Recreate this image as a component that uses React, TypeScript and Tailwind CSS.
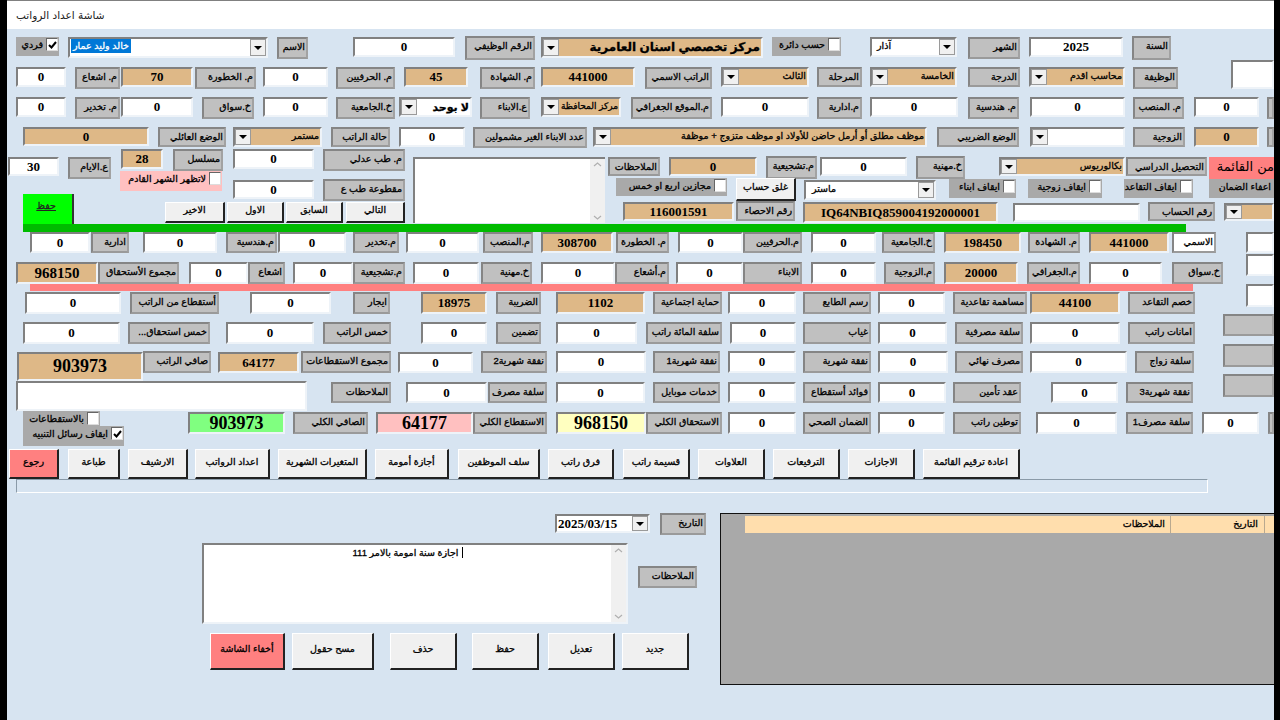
import type { ReactNode } from "react";

const ar = "[font-family:'Liberation_Sans','DejaVu_Sans',sans-serif] [-webkit-text-stroke-width:0.3px]";
const N = "h-[20px] self-start";

function Lbl({ c = "", bg = "bg-[#c0c0c0]", children }: { c?: string; bg?: string; children?: ReactNode }) {
  return (
    <div
      dir="rtl"
      className={`shrink-0 overflow-hidden whitespace-nowrap border-2 border-t-[#858585] border-l-[#858585] border-r-[#a2a2a2] border-b-[#9a9a9a] pr-[1px] pt-[1px] text-[9.5px] leading-[13px] text-black ${bg} ${ar} ${c}`}
    >
      {children}
    </div>
  );
}

function Num({
  c = "",
  bg = "bg-white",
  size = "text-[13px]",
  children = "0",
}: {
  c?: string;
  bg?: string;
  size?: string;
  children?: ReactNode;
}) {
  return (
    <div
      className={`flex shrink-0 items-center justify-center overflow-hidden border-2 border-t-[#808080] border-l-[#808080] border-r-[#eef3f8] border-b-[#eef3f8] font-bold text-black [font-family:'Liberation_Serif',serif] ${bg} ${size} ${c}`}
    >
      {children}
    </div>
  );
}

function Tan({ c = "", size, children = "0" }: { c?: string; size?: string; children?: ReactNode }) {
  return (
    <Num c={c} bg="bg-[#deb887]" size={size}>
      {children}
    </Num>
  );
}

function Arrow() {
  return (
    <span className="flex w-[16px] shrink-0 items-center justify-center border border-[#9a9a9a] bg-[#f0f0f0]">
      <svg width="8" height="4" viewBox="0 0 8 4">
        <path d="M0 0h8L4 4z" fill="#000" />
      </svg>
    </span>
  );
}

function Combo({
  c = "",
  t,
  right = false,
  text = "text-[9.5px] leading-[14px]",
  align = "text-right",
}: {
  c?: string;
  t?: ReactNode;
  right?: boolean;
  text?: string;
  align?: string;
}) {
  return (
    <div
      className={`flex shrink-0 overflow-hidden border-2 border-t-[#808080] border-l-[#808080] border-r-[#eef3f8] border-b-[#eef3f8] ${c}`}
    >
      {!right && <Arrow />}
      <div
        dir="rtl"
        className={`min-w-0 flex-1 overflow-hidden whitespace-nowrap px-[1px] text-black ${ar} ${text} ${align}`}
      >
        {t}
      </div>
      {right && <Arrow />}
    </div>
  );
}

function Chk({
  c = "",
  bg = "bg-[#a9a9a9]",
  t,
  on = false,
}: {
  c?: string;
  bg?: string;
  t: string;
  on?: boolean;
}) {
  return (
    <div className={`flex shrink-0 items-start justify-end gap-[3px] overflow-hidden pr-[1px] pt-[1px] ${bg} ${c}`}>
      <span dir="rtl" className={`whitespace-nowrap text-[9.5px] leading-[14px] text-black ${ar}`}>
        {t}
      </span>
      <span className="flex h-[13px] w-[12px] shrink-0 items-center justify-center border border-t-[#666666] border-l-[#666666] border-r-[#dddddd] border-b-[#dddddd] bg-white">
        {on && (
          <svg width="9" height="8" viewBox="0 0 9 8">
            <path d="M1 4l2.5 2.5L8 1" fill="none" stroke="#000" strokeWidth="2" />
          </svg>
        )}
      </span>
    </div>
  );
}

function Btn({ c = "", children }: { c?: string; children: ReactNode }) {
  return (
    <div
      dir="rtl"
      className={`flex shrink-0 items-center justify-center whitespace-nowrap border border-t-white border-l-white border-r-2 border-b-2 border-r-[#222222] border-b-[#222222] pb-[3px] text-[9.5px] text-black ${ar} ${c}`}
    >
      {children}
    </div>
  );
}

function Scroll() {
  return (
    <div className="flex w-[15px] shrink-0 flex-col items-center justify-between bg-[#f0f0f0] py-[3px] text-[#b0b0b0]">
      <svg width="9" height="5" viewBox="0 0 9 5">
        <path d="M1 4l3.5-3L8 4" fill="none" stroke="currentColor" strokeWidth="1.2" />
      </svg>
      <svg width="9" height="5" viewBox="0 0 9 5">
        <path d="M1 1l3.5 3L8 1" fill="none" stroke="currentColor" strokeWidth="1.2" />
      </svg>
    </div>
  );
}

const btn = "bg-[#f0f0f0]";

export default function App() {
  return (
    <div className="flex h-[720px] w-[1280px] overflow-hidden bg-black">
      <div className="w-[7px] shrink-0" />
      <div className="flex w-[1267px] shrink-0 flex-col overflow-hidden bg-[#d7e4f1]">
        <div className="flex h-[29px] shrink-0 items-center border-t border-[#808080] bg-white pl-[9px]">
          <span dir="rtl" className="text-[10.5px] leading-none text-[#222222] [font-family:'DejaVu_Sans',sans-serif]">
            شاشة اعداد الرواتب
          </span>
        </div>

        {/* الصف الاول */}
        <div className="mt-[7px] flex h-[24px] shrink-0">
          <Chk c="ml-[9px] mt-[1px] h-[19px] w-[43px]" t="فردي" on />
          <Combo
            c="ml-[9px] mt-[1px] h-[21px] w-[200px] bg-white"
            right
            align="text-left"
            t={<span className="inline-block bg-[#0078d7] px-[2px] text-white">خالد وليد عمار</span>}
          />
          <Lbl c="ml-[9px] mt-[1px] h-[22px] w-[31px]">الاسم</Lbl>
          <Num c="ml-[45px] mt-[1px] h-[20px] w-[102px]" />
          <Lbl c="ml-[10px] w-[70px]">الرقم الوظيفي</Lbl>
          <Combo
            c="ml-[6px] mt-[1px] h-[21px] w-[222px] bg-[#deb887]"
            t="مركز تخصصي اسنان العامرية"
            text="text-[12px] font-bold leading-[17px]"
          />
          <Chk c="ml-[9px] mt-[1px] h-[19px] w-[69px]" t="حسب دائرة" />
          <Combo
            c="ml-[29px] mt-[1px] h-[20px] w-[87px] bg-white"
            right
            align="text-left"
            t={<span className="ml-[4px] inline-block">آذار</span>}
          />
          <Lbl c="ml-[11px] mt-[1px] h-[22px] w-[52px]">الشهر</Lbl>
          <Num c="ml-[9px] mt-[1px] h-[20px] w-[94px]">2025</Num>
          <Lbl c="ml-[9px] w-[39px]">السنة</Lbl>
        </div>

        <div className="mt-[7px] flex h-[22px] shrink-0">
          <Num c={`ml-[9px] w-[50px] ${N}`} />
          <Lbl c="ml-[9px] w-[45px]">م. اشعاع</Lbl>
          <Tan c={`ml-[1px] w-[72px] ${N}`}>70</Tan>
          <Lbl c="ml-[2px] w-[61px]">م. الخطورة</Lbl>
          <Num c={`ml-[7px] w-[65px] ${N}`} />
          <Lbl c="ml-[8px] w-[59px]">م. الحرفيين</Lbl>
          <Tan c={`ml-[9px] w-[64px] ${N}`}>45</Tan>
          <Lbl c="ml-[12px] w-[55px]">م. الشهادة</Lbl>
          <Tan c={`ml-[6px] w-[94px] ${N}`}>441000</Tan>
          <Lbl c="ml-[10px] w-[67px]">الراتب الاسمي</Lbl>
          <Combo c={`ml-[9px] w-[88px] bg-[#deb887] ${N}`} t="الثالث" />
          <Lbl c="ml-[8px] h-[20px] w-[45px]">المرحلة</Lbl>
          <Combo c={`ml-[8px] w-[87px] bg-[#deb887] ${N}`} t="الخامسة" />
          <Lbl c="ml-[11px] h-[20px] w-[52px]">الدرجة</Lbl>
          <Combo c={`ml-[9px] w-[96px] bg-[#deb887] ${N}`} t="محاسب اقدم" />
          <Lbl c="ml-[8px] w-[45px]">الوظيفة</Lbl>
          <Num c="-mt-[7px] ml-[53px] h-[29px] w-[43px]"> </Num>
        </div>

        <div className="mt-[8px] flex h-[22px] shrink-0">
          <Num c={`ml-[9px] w-[50px] ${N}`} />
          <Lbl c="ml-[9px] w-[45px]">م. تخدير</Lbl>
          <Num c={`ml-[1px] w-[72px] ${N}`} />
          <Lbl c="ml-[9px] w-[52px]">خ.سواق</Lbl>
          <Num c={`ml-[9px] w-[65px] ${N}`} />
          <Lbl c="ml-[8px] w-[59px]">خ.الجامعية</Lbl>
          <Combo c={`ml-[4px] w-[73px] bg-white ${N}`} t="لا بوحد" text="text-[11px] font-bold leading-[16px]" />
          <Lbl c="ml-[8px] w-[50px]">ع.الابناء</Lbl>
          <Combo c={`ml-[11px] w-[80px] bg-[#deb887] ${N}`} t="مركز المحافظة" text="text-[9px] leading-[14px]" />
          <Lbl c="ml-[10px] w-[81px]">م.الموقع الجغرافي</Lbl>
          <Num c={`ml-[9px] w-[88px] ${N}`} />
          <Lbl c="ml-[8px] w-[45px]">م.ادارية</Lbl>
          <Num c={`ml-[8px] w-[88px] ${N}`} />
          <Lbl c="ml-[10px] w-[51px]">م. هندسية</Lbl>
          <Num c={`ml-[11px] w-[95px] ${N}`} />
          <Lbl c="ml-[8px] w-[51px]">م. المنصب</Lbl>
          <Num c={`ml-[10px] w-[65px] ${N}`} />
          <Lbl c="ml-[8px] w-[7px]" />
        </div>

        <div className="mt-[8px] flex h-[20px] shrink-0">
          <Tan c="ml-[16px] h-[19px] w-[126px]" />
          <Lbl c="ml-[9px] w-[68px]">الوضع العائلي</Lbl>
          <Combo c="ml-[7px] w-[89px] bg-[#deb887]" t="مستمر" />
          <Lbl c="ml-[9px] w-[59px]">حالة الراتب</Lbl>
          <Num c="ml-[9px] w-[66px]" />
          <Lbl c="ml-[8px] h-[21px] w-[114px]">عدد الابناء الغير مشمولين</Lbl>
          <Combo c="ml-[6px] w-[334px] bg-[#deb887]" t="موظف مطلق أو أرمل حاضن للأولاد  او موظف متزوج + موظفة" />
          <Lbl c="ml-[10px] w-[82px]">الوضع الضريبي</Lbl>
          <Combo c="ml-[11px] w-[95px] bg-white" />
          <Lbl c="ml-[8px] w-[52px]">الزوجية</Lbl>
          <Tan c="ml-[9px] w-[65px]" />
          <Lbl c="ml-[8px] w-[7px]" />
        </div>

        {/* القسم الاوسط */}
        <div className="mt-[2px] flex h-[75px] shrink-0">
          <div className="ml-[1px] flex w-[103px] shrink-0 flex-col">
            <div className="mt-[8px] flex h-[22px]">
              <Num c="h-[19px] w-[51px]">30</Num>
              <Lbl c="ml-[9px] w-[43px]">ع.الايام</Lbl>
            </div>
            <div
              dir="rtl"
              className={`ml-[15px] mt-[15px] h-[30px] w-[51px] border-r-2 border-[#333333] bg-[#00ff00] pr-[16px] pt-[5px] text-[9.5px] text-[#222222] underline ${ar}`}
            >
              حفظ
            </div>
          </div>
          <div className="ml-[9px] flex w-[285px] shrink-0 flex-col">
            <div className="flex h-[52px]">
              <div className="flex w-[103px] shrink-0 flex-col">
                <div className="flex h-[22px]">
                  <Tan c="ml-[1px] h-[20px] w-[42px]">28</Tan>
                  <Lbl c="ml-[10px] w-[50px]">مسلسل</Lbl>
                </div>
                <Chk c="h-[20px] w-[102px]" bg="bg-[#ffc0c0]" t="لاتظهر الشهر القادم" />
              </div>
              <div className="ml-[10px] flex w-[81px] shrink-0 flex-col">
                <Num c="h-[20px]" />
                <Num c="mt-[11px] h-[19px]" />
              </div>
              <div className="ml-[9px] flex w-[82px] shrink-0 flex-col">
                <Lbl c="h-[22px]">م. طب عدلي</Lbl>
                <Lbl c="mt-[8px] h-[22px]">مقطوعة طب ع</Lbl>
              </div>
            </div>
            <div className="ml-[45px] mt-[1px] flex h-[21px]">
              <Btn c={`w-[60px] ${btn}`}>الاخير</Btn>
              <Btn c={`ml-[2px] w-[57px] ${btn}`}>الاول</Btn>
              <Btn c={`ml-[2px] w-[57px] ${btn}`}>السابق</Btn>
              <Btn c={`ml-[3px] w-[59px] ${btn}`}>التالي</Btn>
            </div>
          </div>
          <div className="ml-[8px] mt-[8px] flex h-[66px] w-[192px] shrink-0 border-t-2 border-l-2 border-[#808080] bg-white">
            <div className="flex-1" />
            <Scroll />
          </div>
          <div className="ml-[3px] flex w-[666px] shrink-0 flex-col">
            <div className="mt-[7px] flex h-[22px]">
              <Lbl c="mt-[1px] h-[19px] w-[52px]">الملاحظات</Lbl>
              <Tan c="ml-[9px] mt-[1px] h-[19px] w-[88px]" />
              <Lbl c="ml-[9px] h-[23px] w-[51px]">م.تشجيعية</Lbl>
              <Num c="ml-[3px] mt-[1px] h-[19px] w-[87px]" />
              <Lbl c="ml-[9px] h-[23px] w-[49px]">خ.مهنية</Lbl>
              <Combo c="ml-[34px] mt-[1px] h-[19px] w-[126px] bg-[#deb887]" t="بكالوريوس" />
              <Lbl c="ml-[1px] mt-[1px] h-[19px] w-[81px]">التحصيل الدراسي</Lbl>
              <div
                dir="rtl"
                className="ml-[2px] mt-[1px] h-[22px] w-[65px] shrink-0 overflow-hidden whitespace-nowrap bg-[#ff8080] text-[13px] leading-[20px] text-black [font-family:'DejaVu_Sans',sans-serif]"
              >
                من القائمة
              </div>
            </div>
            <div className="flex h-[23px]">
              <Chk c="ml-[8px] h-[18px] w-[111px]" t="مجازين اربع او خمس" />
              <Btn c={`ml-[9px] w-[60px] ${btn}`}>غلق حساب</Btn>
              <Combo
                c="ml-[8px] mt-[2px] h-[20px] w-[132px] bg-white"
                right
                align="text-left"
                t={<span className="ml-[5px] inline-block">ماستر</span>}
              />
              <Chk c="ml-[13px] mt-[1px] h-[19px] w-[67px]" t="ايقاف ابناء" />
              <Chk c="ml-[12px] mt-[1px] h-[19px] w-[74px]" t="ايقاف زوجية" />
              <Chk c="ml-[22px] mt-[1px] h-[19px] w-[69px]" t="ايقاف التقاعد" />
              <Chk c="ml-[16px] mt-[1px] h-[19px] w-[78px]" t="اعفاء الضمان" />
            </div>
            <div className="flex h-[22px]">
              <Tan c="ml-[15px] mt-[1px] h-[19px] w-[111px]">116001591</Tan>
              <Lbl c="ml-[2px] h-[20px] w-[59px]">رقم الاحصاء</Lbl>
              <Tan c="ml-[8px] mt-[1px] h-[21px] w-[195px]">IQ64NBIQ859004192000001</Tan>
              <Num c="ml-[15px] mt-[2px] h-[19px] w-[127px]"> </Num>
              <Lbl c="ml-[8px] mt-[1px] h-[19px] w-[67px]">رقم الحساب</Lbl>
              <Combo c="ml-[9px] mt-[2px] h-[18px] w-[50px] bg-[#deb887]" />
            </div>
          </div>
        </div>

        <div className="ml-[16px] h-[8px] w-[1163px] shrink-0 bg-[#00bb00]" />

        {/* الجدول */}
        <div className="flex shrink-0">
          <div className="flex w-[1216px] shrink-0 flex-col">
            <div className="flex h-[21px]">
              <Num c="ml-[23px] w-[60px]" />
              <Lbl c="ml-[1px] w-[38px]">ادارية</Lbl>
              <Num c="ml-[14px] w-[74px]" />
              <Lbl c="ml-[9px] w-[51px]">م.هندسية</Lbl>
              <Num c="ml-[1px] w-[68px]" />
              <Lbl c="ml-[7px] w-[46px]">م.تخدير</Lbl>
              <Num c="ml-[7px] w-[73px]" />
              <Lbl c="ml-[4px] w-[50px]">م.المنصب</Lbl>
              <Tan c="ml-[8px] w-[72px]">308700</Tan>
              <Lbl c="ml-[3px] w-[53px]">م. الخطورة</Lbl>
              <Num c="ml-[9px] w-[65px]" />
              <Lbl c="w-[59px]">م.الحرفيين</Lbl>
              <Num c="ml-[9px] w-[65px]" />
              <Lbl c="ml-[6px] w-[53px]">خ.الجامعية</Lbl>
              <Tan c="ml-[9px] w-[77px]">198450</Tan>
              <Lbl c="ml-[7px] w-[52px]">م. الشهادة</Lbl>
              <Tan c="ml-[9px] w-[80px]">441000</Tan>
              <Lbl c="ml-[3px] w-[44px]" bg="bg-white">الاسمي</Lbl>
            </div>

            <div className="mt-[9px] flex h-[22px]">
              <Tan c="ml-[9px] w-[82px]" size="text-[15px]">968150</Tan>
              <Lbl c="w-[81px]">مجموع الأستحقاق</Lbl>
              <Num c="ml-[10px] w-[59px]" />
              <Lbl c="w-[37px]">اشعاع</Lbl>
              <Num c="ml-[8px] w-[60px]" />
              <Lbl c="w-[52px]">م.تشجيعية</Lbl>
              <Num c="ml-[8px] w-[66px]" />
              <Lbl c="ml-[2px] w-[51px]">خ.مهنية</Lbl>
              <Num c="ml-[9px] w-[74px]" />
              <Lbl c="w-[54px]">م.أشعاع</Lbl>
              <Num c="ml-[7px] w-[67px]" />
              <Lbl c="w-[59px]">الابناء</Lbl>
              <Num c="ml-[9px] w-[65px]" />
              <Lbl c="ml-[8px] w-[51px]">م.الزوجية</Lbl>
              <Tan c="ml-[9px] w-[74px]">20000</Tan>
              <Lbl c="ml-[9px] w-[53px]">م.الجغرافي</Lbl>
              <Num c="ml-[9px] w-[73px]" />
              <Lbl c="ml-[10px] w-[51px]">خ.سواق</Lbl>
            </div>

            <div className="ml-[23px] h-[7px] w-[1163px] bg-[#ff8080]" />

            <div className="mt-[1px] flex h-[22px]">
              <Num c="ml-[18px] w-[96px]" />
              <Lbl c="ml-[9px] w-[89px]">أستقطاع من الراتب</Lbl>
              <Num c="ml-[31px] w-[81px]" />
              <Lbl c="ml-[22px] w-[37px]">ايجار</Lbl>
              <Tan c="ml-[31px] w-[66px]">18975</Tan>
              <Lbl c="ml-[9px] w-[45px]">الضريبة</Lbl>
              <Tan c="ml-[15px] w-[89px]">1102</Tan>
              <Lbl c="ml-[8px] w-[69px]">حماية اجتماعية</Lbl>
              <Num c="ml-[6px] w-[68px]" />
              <Lbl c="ml-[7px] w-[68px]">رسم الطابع</Lbl>
              <Num c="ml-[7px] w-[67px]" />
              <Lbl c="ml-[8px] w-[74px]">مساهمة تقاعدية</Lbl>
              <Tan c="ml-[3px] w-[90px]">44100</Tan>
              <Lbl c="ml-[8px] w-[67px]">خصم التقاعد</Lbl>
            </div>

            <div className="mt-[8px] flex h-[22px]">
              <Num c="ml-[16px] w-[97px]" />
              <Lbl c="ml-[8px] w-[82px]">خمس استحقاق...</Lbl>
              <Num c="ml-[16px] w-[88px]" />
              <Lbl c="ml-[9px] w-[68px]">خمس الراتب</Lbl>
              <Num c="ml-[30px] w-[66px]" />
              <Lbl c="ml-[9px] w-[45px]">تضمين</Lbl>
              <Num c="ml-[15px] w-[81px]" />
              <Lbl c="ml-[9px] w-[76px]">سلفة المائة راتب</Lbl>
              <Num c="ml-[8px] w-[66px]" />
              <Lbl c="ml-[7px] w-[68px]">غياب</Lbl>
              <Num c="ml-[7px] w-[69px]" />
              <Lbl c="ml-[8px] w-[68px]">سلفة مصرفية</Lbl>
              <Num c="ml-[7px] w-[90px]" />
              <Lbl c="ml-[8px] w-[67px]">امانات راتب</Lbl>
            </div>

            <div className="mt-[7px] flex h-[22px]">
              <Tan c="ml-[10px] mt-[1px] h-[29px] w-[126px]" size="text-[18px]">903973</Tan>
              <Lbl c="w-[68px]">صافي الراتب</Lbl>
              <Tan c="ml-[7px] mt-[1px] w-[81px]">64177</Tan>
              <Lbl c="ml-[2px] w-[90px]">مجموع الاستقطاعات</Lbl>
              <Num c="ml-[7px] mt-[1px] w-[75px]" />
              <Lbl c="ml-[8px] w-[66px]">نفقة شهرية2</Lbl>
              <Num c="ml-[9px] w-[90px]" />
              <Lbl c="ml-[7px] w-[67px]">نفقة شهرية1</Lbl>
              <Num c="ml-[8px] w-[68px]" />
              <Lbl c="ml-[7px] w-[68px]">نفقة شهرية</Lbl>
              <Num c="ml-[7px] w-[70px]" />
              <Lbl c="ml-[7px] w-[68px]">مصرف نهائي</Lbl>
              <Num c="ml-[7px] w-[97px]" />
              <Lbl c="ml-[8px] w-[59px]">سلفة زواج</Lbl>
            </div>

            <div className="mt-[8px] flex h-[22px]">
              <Num c="ml-[9px] h-[30px] w-[291px]"> </Num>
              <Lbl c="ml-[24px] mt-[1px] w-[60px]">الملاحظات</Lbl>
              <Num c="ml-[15px] mt-[1px] w-[81px]" />
              <Lbl c="ml-[1px] mt-[1px] w-[59px]">سلفة مصرف</Lbl>
              <Num c="ml-[9px] mt-[1px] w-[89px]" />
              <Lbl c="ml-[8px] mt-[1px] w-[67px]">خدمات موبايل</Lbl>
              <Num c="ml-[8px] mt-[1px] w-[68px]" />
              <Lbl c="ml-[7px] mt-[1px] w-[68px]">فوائد أستقطاع</Lbl>
              <Num c="ml-[7px] mt-[1px] w-[68px]" />
              <Lbl c="ml-[7px] mt-[1px] w-[68px]">عقد تأمين</Lbl>
              <Num c="ml-[30px] mt-[1px] w-[67px]" />
              <Lbl c="ml-[8px] mt-[1px] w-[67px]">نفقة شهرية3</Lbl>
            </div>
          </div>

          <div className="ml-[23px] flex w-[28px] shrink-0 flex-col">
            <Num c="h-[21px]"> </Num>
            <Num c="mt-[1px] h-[22px]"> </Num>
            <Num c="mt-[8px] h-[23px]"> </Num>
            <Lbl c="-ml-[23px] mt-[7px] h-[22px] w-[51px]" />
            <Lbl c="-ml-[23px] mt-[8px] h-[23px] w-[51px]" />
            <Lbl c="-ml-[23px] mt-[7px] h-[23px] w-[51px]" />
          </div>
        </div>

        <div className="mt-[8px] flex h-[35px] shrink-0">
          <div className="ml-[16px] flex w-[101px] shrink-0 flex-col">
            <Chk c="h-[15px] w-[77px]" t="بالاستقطاعات" />
            <Chk c="h-[20px] w-[101px]" t="ايقاف رسائل التنبيه" on />
          </div>
          <Num c="ml-[64px] mt-[1px] h-[22px] w-[97px]" bg="bg-[#80ff80]" size="text-[18px]">903973</Num>
          <Lbl c="ml-[8px] mt-[1px] h-[22px] w-[75px]">الصافي الكلي</Lbl>
          <Num c="ml-[8px] mt-[1px] h-[22px] w-[97px]" bg="bg-[#ffc0c0]" size="text-[18px]">64177</Num>
          <Lbl c="mt-[1px] h-[22px] w-[74px]">الاستقطاع الكلي</Lbl>
          <Num c="ml-[9px] mt-[1px] h-[22px] w-[90px]" bg="bg-[#ffffc0]" size="text-[18px]">968150</Num>
          <Lbl c="mt-[1px] h-[22px] w-[76px]">الاستحقاق الكلي</Lbl>
          <Num c="ml-[6px] mt-[1px] h-[22px] w-[68px]" />
          <Lbl c="ml-[7px] mt-[1px] h-[22px] w-[68px]">الضمان الصحي</Lbl>
          <Num c="ml-[7px] mt-[1px] h-[22px] w-[67px]" />
          <Lbl c="ml-[8px] mt-[1px] h-[22px] w-[68px]">توطين راتب</Lbl>
          <Num c="ml-[15px] mt-[1px] h-[22px] w-[81px]" />
          <Lbl c="ml-[9px] mt-[1px] h-[22px] w-[67px]">سلفة مصرف1</Lbl>
          <Num c="ml-[9px] mt-[1px] h-[22px] w-[57px]" />
          <Lbl c="ml-[9px] mt-[1px] h-[22px] w-[6px]" />
        </div>

        {/* ازرار الشاشات */}
        <div className="mt-[3px] flex h-[30px] shrink-0">
          <Btn c="ml-[2px] w-[50px] bg-[#ff8080]">رجوع</Btn>
          <Btn c={`ml-[9px] w-[52px] ${btn}`}>طباعة</Btn>
          <Btn c={`ml-[8px] w-[60px] ${btn}`}>الارشيف</Btn>
          <Btn c={`ml-[7px] w-[75px] ${btn}`}>اعداد الرواتب</Btn>
          <Btn c={`ml-[8px] w-[89px] ${btn}`}>المتغيرات الشهرية</Btn>
          <Btn c={`ml-[8px] w-[74px] ${btn}`}>أجازة أمومة</Btn>
          <Btn c={`ml-[9px] w-[82px] ${btn}`}>سلف الموظفين</Btn>
          <Btn c={`ml-[8px] w-[66px] ${btn}`}>فرق راتب</Btn>
          <Btn c={`ml-[9px] w-[67px] ${btn}`}>قسيمة راتب</Btn>
          <Btn c={`ml-[8px] w-[67px] ${btn}`}>العلاوات</Btn>
          <Btn c={`ml-[8px] w-[67px] ${btn}`}>الترفيعات</Btn>
          <Btn c={`ml-[8px] w-[67px] ${btn}`}>الاجازات</Btn>
          <Btn c={`ml-[8px] w-[97px] ${btn}`}>اعادة ترقيم القائمة</Btn>
        </div>

        <div className="ml-[9px] h-[14px] w-[1192px] shrink-0 border border-t-[#8a9aa8] border-l-[#8a9aa8] border-r-white border-b-white" />

        {/* القسم السفلي */}
        <div className="mt-[20px] flex shrink-0">
          <div className="flex w-[699px] shrink-0 flex-col">
            <div className="flex h-[22px]">
              <div className="ml-[548px] mt-[1px] flex h-[19px] w-[95px] shrink-0 border-2 border-t-[#808080] border-l-[#808080] border-r-[#eef3f8] border-b-[#eef3f8] bg-white">
                <span className="flex-1 pl-[1px] text-[13px] font-bold leading-[15px] text-black [font-family:'Liberation_Serif',serif]">
                  2025/03/15
                </span>
                <Arrow />
              </div>
              <Lbl c="ml-[10px] w-[46px]">التاريخ</Lbl>
            </div>
            <div className="mt-[8px] flex h-[81px]">
              <div className="ml-[195px] flex w-[426px] shrink-0 border-2 border-t-[#808080] border-l-[#808080] border-r-[#eef3f8] border-b-[#eef3f8] bg-white">
                <div dir="rtl" className={`flex-1 pt-[1px] text-center text-[9.5px] text-black ${ar}`}>
                  <span className="border-r border-black pr-[3px]">اجازة سنة امومة بالامر 111</span>
                </div>
                <Scroll />
              </div>
              <Lbl c="ml-[10px] mt-[23px] h-[22px] w-[59px]">الملاحظات</Lbl>
            </div>
            <div className="mt-[9px] flex h-[37px]">
              <Btn c="ml-[203px] w-[75px] bg-[#ff8080]">أخفاء الشاشة</Btn>
              <Btn c={`ml-[7px] w-[82px] ${btn}`}>مسح حقول</Btn>
              <Btn c={`ml-[16px] w-[67px] ${btn}`}>حذف</Btn>
              <Btn c={`ml-[15px] w-[67px] ${btn}`}>حفظ</Btn>
              <Btn c={`ml-[9px] w-[67px] ${btn}`}>تعديل</Btn>
              <Btn c={`ml-[7px] w-[67px] ${btn}`}>جديد</Btn>
            </div>
          </div>

          <div className="ml-[14px] h-[172px] w-[560px] shrink-0 border border-[#111111] bg-[#a9a9a9] pl-[24px] pt-[2px]">
            <div dir="rtl" className={`flex h-[17px] bg-[#ffdead] text-[9.5px] leading-[15px] text-black ${ar}`}>
              <div className="w-[15px] shrink-0 border-l border-[#b9a98f]" />
              <div className="w-[94px] shrink-0 border-l border-[#b9a98f] pr-[6px]">التاريخ</div>
              <div className="flex-1 pr-[5px]">الملاحظات</div>
            </div>
          </div>
        </div>
      </div>
      <div className="w-[6px] shrink-0" />
    </div>
  );
}
